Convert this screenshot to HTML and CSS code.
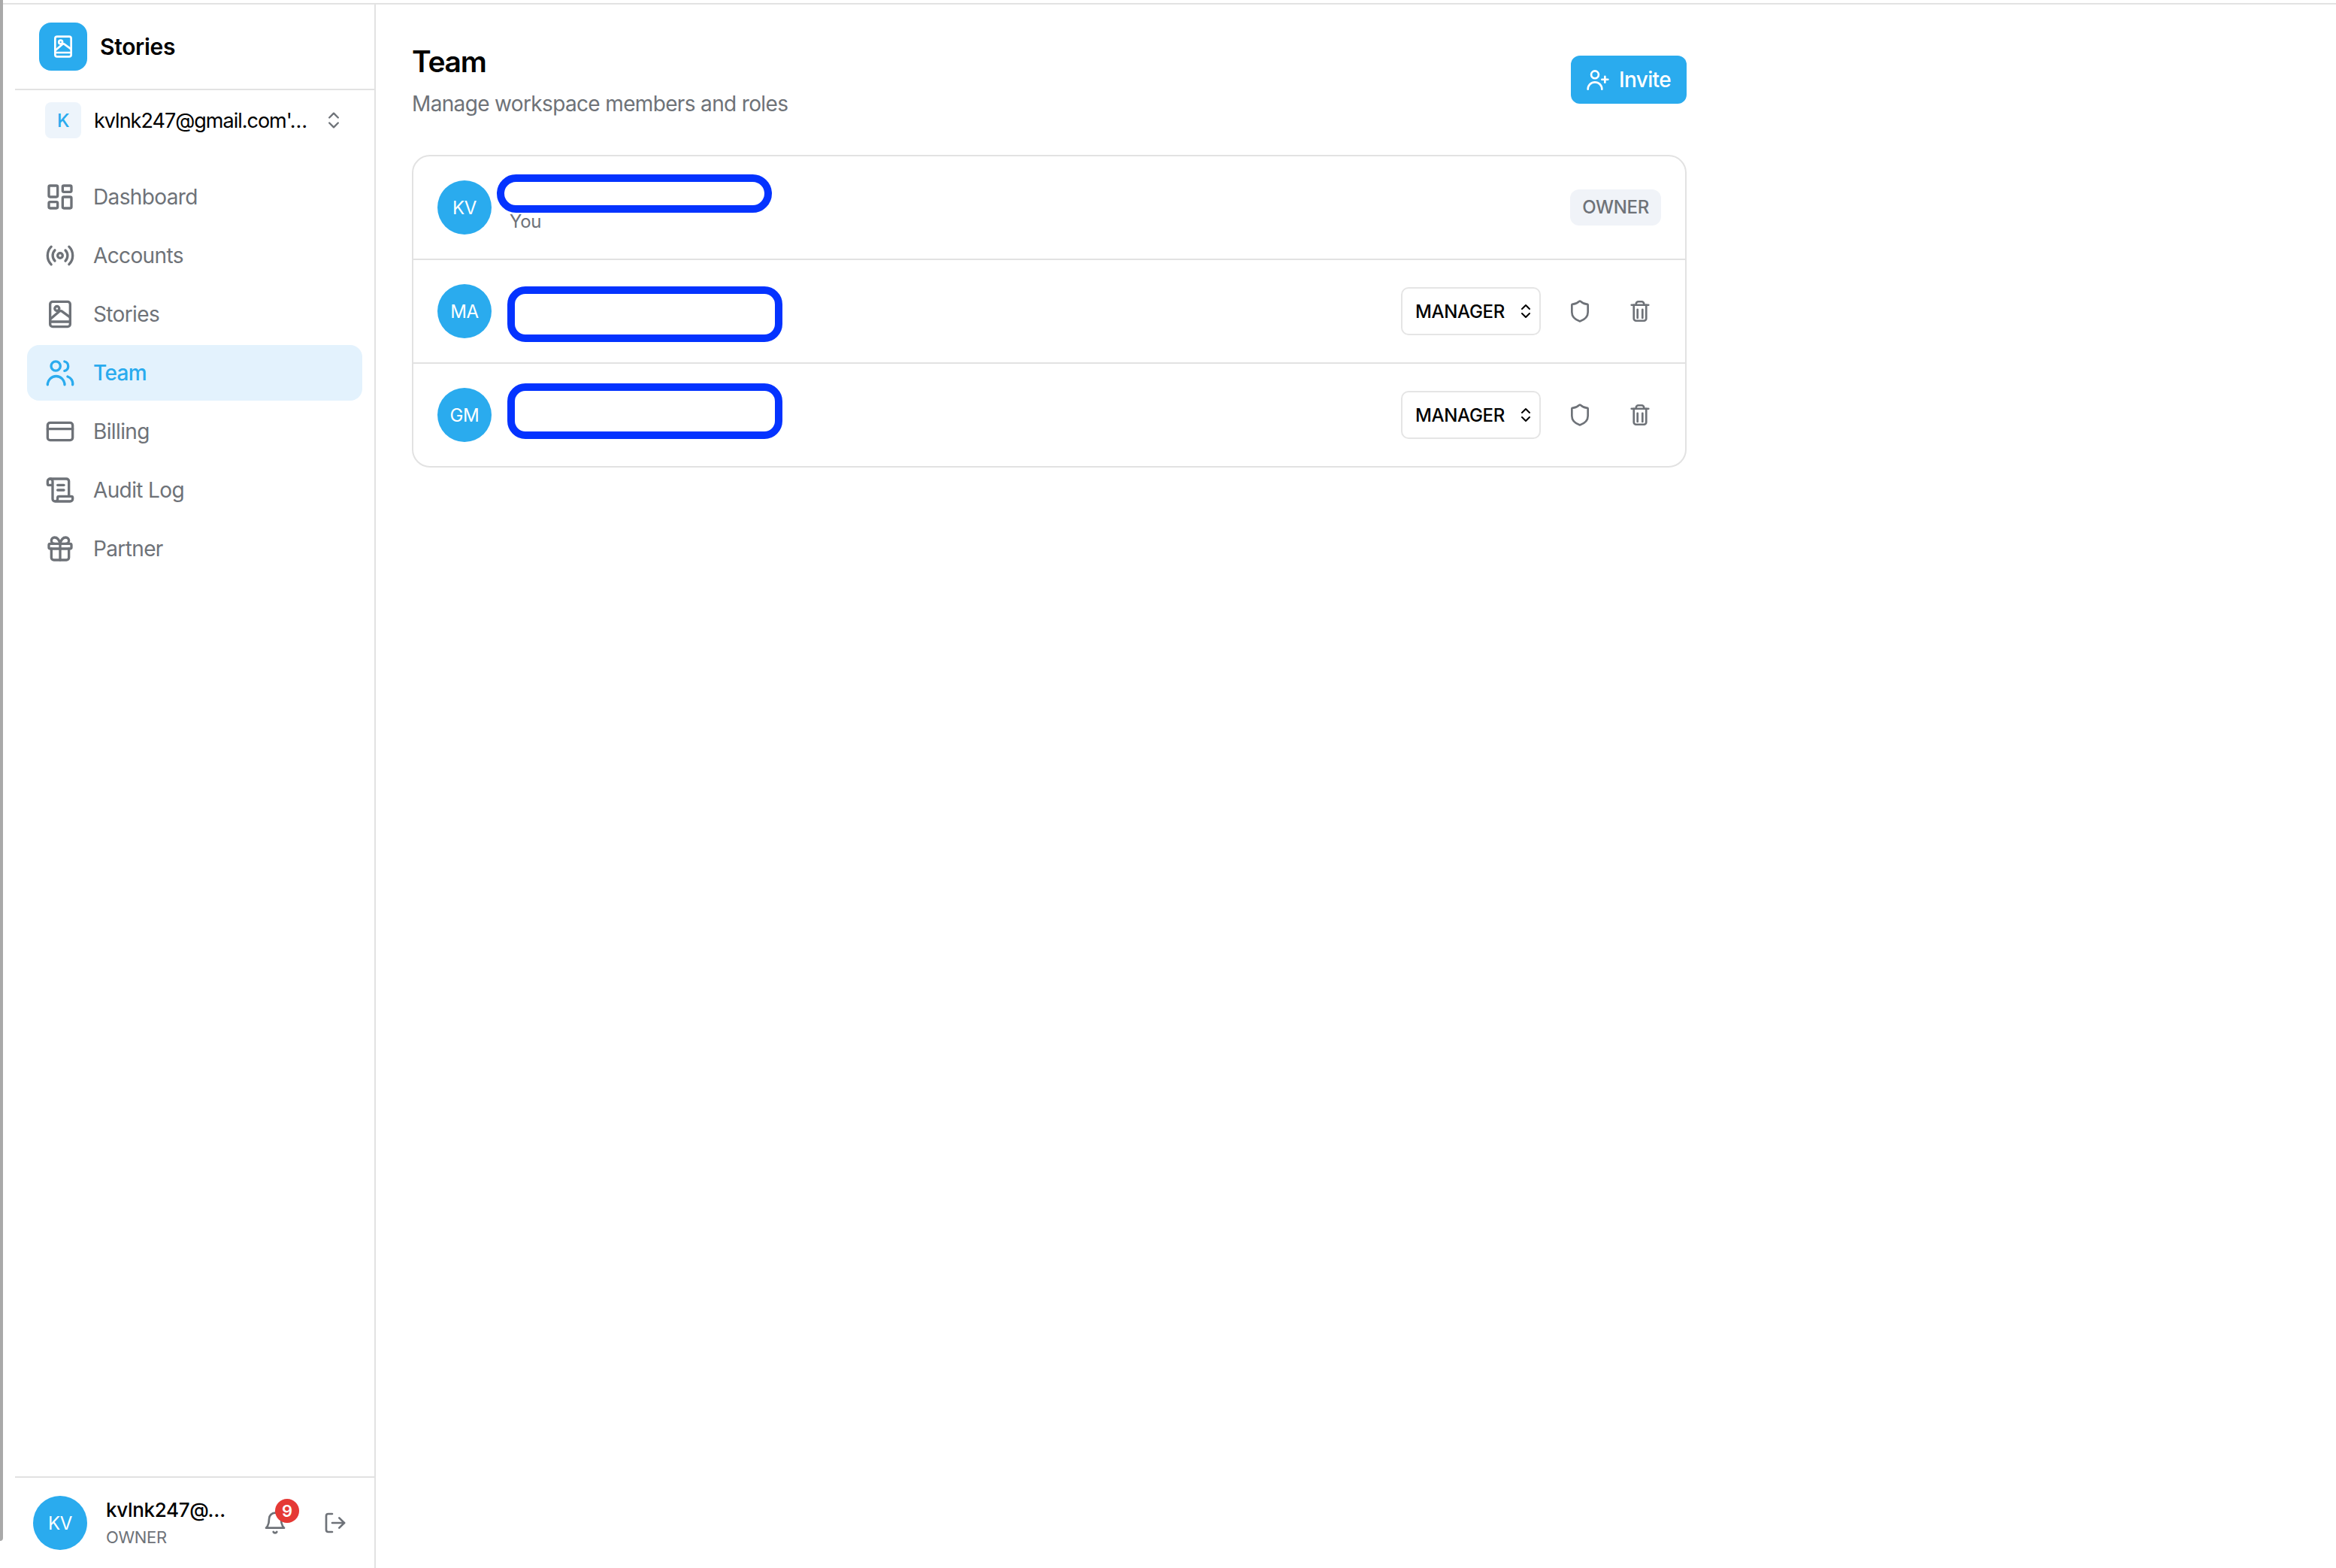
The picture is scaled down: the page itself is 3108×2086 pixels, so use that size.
FILE: index.html
```html
<!DOCTYPE html>
<html lang="en">
<head>
  <meta charset="UTF-8">
  <meta name="viewport" content="width=device-width, initial-scale=1.0">
  <title>Team</title>
  <link rel="stylesheet" href="styles.css">
</head>
<body>
  <div class="window-edge"></div>
  <div class="window">
    <!-- Sidebar -->
    <aside class="sidebar">
      <div class="brand">
        <div class="brand-logo">
          <svg class="icon icon-32" viewBox="0 0 24 24"><rect x="4" y="2" width="16" height="20" rx="2"/><path d="M4 18h16"/><circle cx="9.5" cy="7.5" r="1.8"/><path d="M4 16l7-6a2 2 0 0 1 2.8 0L20 14.5"/></svg>
        </div>
        <div class="brand-name">Stories</div>
      </div>

      <div class="workspace">
        <div class="workspace-badge">K</div>
        <div class="workspace-name">kvlnk247@gmail.com'…</div>
        <svg class="icon icon-28 workspace-chevrons" viewBox="0 0 24 24"><path d="m7 15 5 5 5-5"/><path d="m7 9 5-5 5 5"/></svg>
      </div>

      <nav class="nav">
        <a class="nav-item">
          <svg class="icon icon-40" viewBox="0 0 24 24"><rect x="3" y="3" width="7" height="9" rx="1"/><rect x="14" y="3" width="7" height="5" rx="1"/><rect x="14" y="12" width="7" height="9" rx="1"/><rect x="3" y="16" width="7" height="5" rx="1"/></svg>
          Dashboard
        </a>
        <a class="nav-item">
          <svg class="icon icon-40" viewBox="0 0 24 24"><path d="M4.9 19.1C1 15.2 1 8.8 4.9 4.9"/><path d="M7.8 16.2c-2.3-2.3-2.3-6.1 0-8.5"/><circle cx="12" cy="12" r="2"/><path d="M16.2 7.8c2.3 2.3 2.3 6.1 0 8.5"/><path d="M19.1 4.9C23 8.8 23 15.1 19.1 19"/></svg>
          Accounts
        </a>
        <a class="nav-item">
          <svg class="icon icon-40" viewBox="0 0 24 24"><rect x="4" y="2" width="16" height="20" rx="2"/><path d="M4 18h16"/><circle cx="9.5" cy="7.5" r="1.8"/><path d="M4 16l7-6a2 2 0 0 1 2.8 0L20 14.5"/></svg>
          Stories
        </a>
        <a class="nav-item active">
          <svg class="icon icon-40" viewBox="0 0 24 24"><circle cx="8.5" cy="6.6" r="3.7"/><path d="M2 21.5a6.8 6.8 0 0 1 13.6 0"/><path d="M15.5 3a3.8 3.8 0 0 1 0 7.4"/><path d="M18 15a6 6 0 0 1 4 6.5"/></svg>
          Team
        </a>
        <a class="nav-item">
          <svg class="icon icon-40" viewBox="0 0 24 24"><rect x="2" y="5" width="20" height="14" rx="2"/><path d="M2 10h20"/></svg>
          Billing
        </a>
        <a class="nav-item">
          <svg class="icon icon-40" viewBox="0 0 24 24"><path d="M15 12h-5"/><path d="M15 8h-5"/><path d="M19 17V5a2 2 0 0 0-2-2H4"/><path d="M8 21h12a2 2 0 0 0 2-2v-1a1 1 0 0 0-1-1H11a1 1 0 0 0-1 1v1a2 2 0 1 1-4 0V5a2 2 0 1 0-4 0v2a1 1 0 0 0 1 1h3"/></svg>
          Audit Log
        </a>
        <a class="nav-item">
          <svg class="icon icon-40" viewBox="0 0 24 24"><rect x="3" y="8" width="18" height="4" rx="1"/><path d="M12 8v13"/><path d="M19 12v7a2 2 0 0 1-2 2H7a2 2 0 0 1-2-2v-7"/><path d="M7.5 8a2.5 2.5 0 0 1 0-5A4.8 8 0 0 1 12 8a4.8 8 0 0 1 4.5-5 2.5 2.5 0 0 1 0 5"/></svg>
          Partner
        </a>
      </nav>

      <div class="account">
        <div class="avatar">KV</div>
        <div class="account-info">
          <div class="account-name">kvlnk247@…</div>
          <div class="account-role">OWNER</div>
        </div>
        <div class="bell">
          <svg class="icon icon-32" viewBox="0 0 24 24"><path d="M6 8a6 6 0 0 1 12 0c0 7 3 9 3 9H3s3-2 3-9"/><path d="M10.3 21a1.94 1.94 0 0 0 3.4 0"/></svg>
          <span class="bell-count">9</span>
        </div>
        <svg class="icon icon-32 logout" viewBox="0 0 24 24"><path d="M9 21H5a2 2 0 0 1-2-2V5a2 2 0 0 1 2-2h4"/><path d="m16 17 5-5-5-5"/><path d="M21 12H9"/></svg>
      </div>
    </aside>

    <!-- Main content -->
    <main class="main">
      <div class="page-header">
        <div>
          <h1 class="page-title">Team</h1>
          <p class="page-subtitle">Manage workspace members and roles</p>
        </div>
        <button class="invite-button">
          <svg class="icon icon-32" viewBox="0 0 24 24"><circle cx="9" cy="7" r="3.7"/><path d="M2 21.5a7 7 0 0 1 14 0"/><path d="M19 8.8v6"/><path d="M16 11.8h6"/></svg>
          Invite
        </button>
      </div>

      <div class="members">
        <div class="member">
          <div class="member-avatar">KV</div>
          <div class="member-info">
            <div class="member-name"></div>
            <div class="member-note">You</div>
          </div>
          <span class="role-badge">OWNER</span>
          <div class="redact redact-owner"></div>
        </div>

        <div class="member">
          <div class="member-avatar">MA</div>
          <div class="role-select">
            MANAGER
            <svg class="icon icon-24" viewBox="0 0 24 24"><path d="m7 15 5 5 5-5"/><path d="m7 9 5-5 5 5"/></svg>
          </div>
          <svg class="icon icon-32 action-shield" viewBox="0 0 24 24"><path d="M20 13c0 5-3.5 7.5-7.66 8.95a1 1 0 0 1-.67-.01C7.5 20.5 4 18 4 13V6a1 1 0 0 1 1-1c2 0 4.5-1.2 6.24-2.72a1.17 1.17 0 0 1 1.52 0C14.51 3.81 17 5 19 5a1 1 0 0 1 1 1z"/></svg>
          <svg class="icon icon-36 action-trash" viewBox="0 0 24 24"><path d="M4.5 6.5h15"/><path d="M6.5 6.5v12a2 2 0 0 0 2 2h7a2 2 0 0 0 2-2v-12"/><path d="M8.5 6.5v-1a2 2 0 0 1 2-2h3a2 2 0 0 1 2 2v1"/><path d="M9.8 10.5V18"/><path d="M14.2 10.5V18"/></svg>
          <div class="redact redact-second"></div>
        </div>

        <div class="member">
          <div class="member-avatar">GM</div>
          <div class="role-select">
            MANAGER
            <svg class="icon icon-24" viewBox="0 0 24 24"><path d="m7 15 5 5 5-5"/><path d="m7 9 5-5 5 5"/></svg>
          </div>
          <svg class="icon icon-32 action-shield" viewBox="0 0 24 24"><path d="M20 13c0 5-3.5 7.5-7.66 8.95a1 1 0 0 1-.67-.01C7.5 20.5 4 18 4 13V6a1 1 0 0 1 1-1c2 0 4.5-1.2 6.24-2.72a1.17 1.17 0 0 1 1.52 0C14.51 3.81 17 5 19 5a1 1 0 0 1 1 1z"/></svg>
          <svg class="icon icon-36 action-trash" viewBox="0 0 24 24"><path d="M4.5 6.5h15"/><path d="M6.5 6.5v12a2 2 0 0 0 2 2h7a2 2 0 0 0 2-2v-12"/><path d="M8.5 6.5v-1a2 2 0 0 1 2-2h3a2 2 0 0 1 2 2v1"/><path d="M9.8 10.5V18"/><path d="M14.2 10.5V18"/></svg>
          <div class="redact redact-third"></div>
        </div>
      </div>
    </main>
  </div>
</body>
</html>
```
FILE: styles.css
```css
/* Page */
body {
  display: flex;
  margin: 0;
  height: 100vh;
  overflow: hidden;
  background: #ffffff;
  color: #000000;
  font-family: Inter, "Liberation Sans", sans-serif;
  letter-spacing: -0.02em;
}

/* Grey edge of the neighbouring window */
.window-edge {
  flex: 0 0 4px;
  height: 2050px;
  background: #a9a9a9;
  border-bottom-right-radius: 4px;
}

.window {
  flex: 1;
  display: flex;
  margin-top: 4px;
  border-top: 2px solid #e2e2e2;
  min-width: 0;
}

/* Icons */
.icon {
  flex-shrink: 0;
  fill: none;
  stroke: currentColor;
  stroke-width: 2;
  stroke-linecap: round;
  stroke-linejoin: round;
}
.icon-24 { width: 24px; height: 24px; }
.icon-28 { width: 28px; height: 28px; }
.icon-32 { width: 32px; height: 32px; }
.icon-36 { width: 36px; height: 36px; }
.icon-40 { width: 40px; height: 40px; }

/* Sidebar */
.sidebar {
  flex: 0 0 496px;
  box-sizing: border-box;
  display: flex;
  flex-direction: column;
  border-right: 2px solid #e2e2e2;
}

.brand {
  display: flex;
  align-items: center;
  gap: 17px;
  height: 114px;
  box-sizing: border-box;
  margin-left: 16px;
  padding-left: 32px;
  border-bottom: 2px solid #e2e2e2;
}
.brand-logo {
  display: flex;
  align-items: center;
  justify-content: center;
  width: 64px;
  height: 64px;
  border-radius: 16px;
  background: #2aabee;
  color: #ffffff;
}
.brand-name {
  font-size: 30px;
  font-weight: 600;
}

.workspace {
  display: flex;
  align-items: center;
  margin: 16px 0 0 56px;
}
.workspace-badge {
  display: flex;
  align-items: center;
  justify-content: center;
  width: 48px;
  height: 48px;
  border-radius: 8px;
  background: #edf4fb;
  color: #2aabee;
  font-size: 24px;
  font-weight: 500;
}
.workspace-name {
  margin-left: 17px;
  width: 305px;
  font-size: 27px;
  letter-spacing: -1px;
  white-space: nowrap;
}
.workspace-chevrons {
  color: #6e7278;
}

.nav {
  display: flex;
  flex-direction: column;
  gap: 4px;
  margin: 41px 16px 0 32px;
}
.nav-item {
  display: flex;
  align-items: center;
  gap: 24px;
  height: 74px;
  padding-left: 24px;
  border-radius: 16px;
  color: #6e7278;
  font-size: 28px;
  letter-spacing: -0.63px;
}
.nav-item.active {
  background: #e3f2fd;
  color: #2aabee;
  font-weight: 500;
}

/* Account footer */
.account {
  display: flex;
  align-items: center;
  height: 122px;
  box-sizing: border-box;
  margin: auto 0 0 16px;
  padding: 0 0 0 24px;
  border-top: 2px solid #e2e2e2;
}
.avatar {
  display: flex;
  align-items: center;
  justify-content: center;
  flex-shrink: 0;
  width: 72px;
  height: 72px;
  border-radius: 50%;
  background: #2aabee;
  color: #ffffff;
  font-size: 24px;
}
.account-info {
  margin: 2px 0 0 25px;
  width: 209px;
}
.account-name {
  font-size: 26px;
  font-weight: 500;
  line-height: 36px;
}
.account-role {
  color: #6e7278;
  font-size: 22px;
  line-height: 36px;
}
.bell {
  position: relative;
  display: flex;
  color: #6e7278;
}
.bell-count {
  position: absolute;
  top: -16px;
  right: -16px;
  width: 32px;
  height: 32px;
  border-radius: 50%;
  background: #e53935;
  color: #ffffff;
  font-size: 22px;
  font-weight: 600;
  line-height: 32px;
  text-align: center;
}
.logout {
  margin-left: 48px;
  color: #6e7278;
}

/* Main */
.main {
  flex: 1;
  padding: 52px 0 0 48px;
}
.page-header {
  display: flex;
  justify-content: space-between;
  width: 1696px;
}
.page-title {
  margin: 0;
  font-size: 39px;
  font-weight: 600;
  letter-spacing: -1.3px;
  line-height: 48px;
}
.page-subtitle {
  margin: 12px 0 0;
  color: #6e7278;
  font-size: 28px;
  letter-spacing: -0.65px;
  line-height: 40px;
}
.invite-button {
  display: flex;
  align-items: center;
  gap: 12px;
  height: 64px;
  margin-top: 16px;
  padding: 0 21px 0 20px;
  border: none;
  border-radius: 12px;
  background: #2aabee;
  color: #ffffff;
  font-family: inherit;
  font-size: 28px;
  font-weight: 500;
  letter-spacing: -0.65px;
}

/* Member list */
.members {
  box-sizing: border-box;
  width: 1696px;
  margin-top: 48px;
  border: 2px solid #e2e2e2;
  border-radius: 24px;
}
.member {
  position: relative;
  display: flex;
  align-items: center;
  height: 136px;
  padding: 0 32px;
}
.member + .member {
  border-top: 2px solid #e2e2e2;
}
.member-avatar {
  display: flex;
  align-items: center;
  justify-content: center;
  flex-shrink: 0;
  width: 72px;
  height: 72px;
  border-radius: 50%;
  background: #2aabee;
  color: #ffffff;
  font-size: 24px;
}
.member-info {
  margin-left: 24px;
  margin-right: auto;
}
.member-name {
  height: 38px;
}
.member-note {
  color: #6e7278;
  font-size: 24px;
  line-height: 30px;
}
.role-badge {
  padding: 0 16px;
  border-radius: 12px;
  background: #f0f3f8;
  color: #6e7278;
  font-size: 24px;
  font-weight: 500;
  line-height: 48px;
}
.role-select {
  display: flex;
  align-items: center;
  justify-content: space-between;
  box-sizing: border-box;
  width: 186px;
  height: 64px;
  margin-left: auto;
  padding: 0 6px 0 17px;
  border: 2px solid #e5e5e5;
  border-radius: 10px;
  font-size: 24px;
  font-weight: 500;
}
.action-shield {
  margin-left: 36px;
  color: #6e7278;
}
.action-trash {
  margin-left: 46px;
  margin-right: 10px;
  color: #6e7278;
  stroke-width: 1.8;
}

/* Blue marks drawn over the names */
.redact {
  position: absolute;
  box-sizing: border-box;
  width: 366px;
  border: 10px solid #0433ff;
  background: #ffffff;
}
.redact-owner {
  left: 111px;
  top: 24px;
  height: 51px;
  border-radius: 26px;
}
.redact-second {
  left: 125px;
  top: 35px;
  height: 74px;
  border-radius: 24px;
}
.redact-third {
  left: 125px;
  top: 26px;
  height: 74px;
  border-radius: 24px;
}
```
